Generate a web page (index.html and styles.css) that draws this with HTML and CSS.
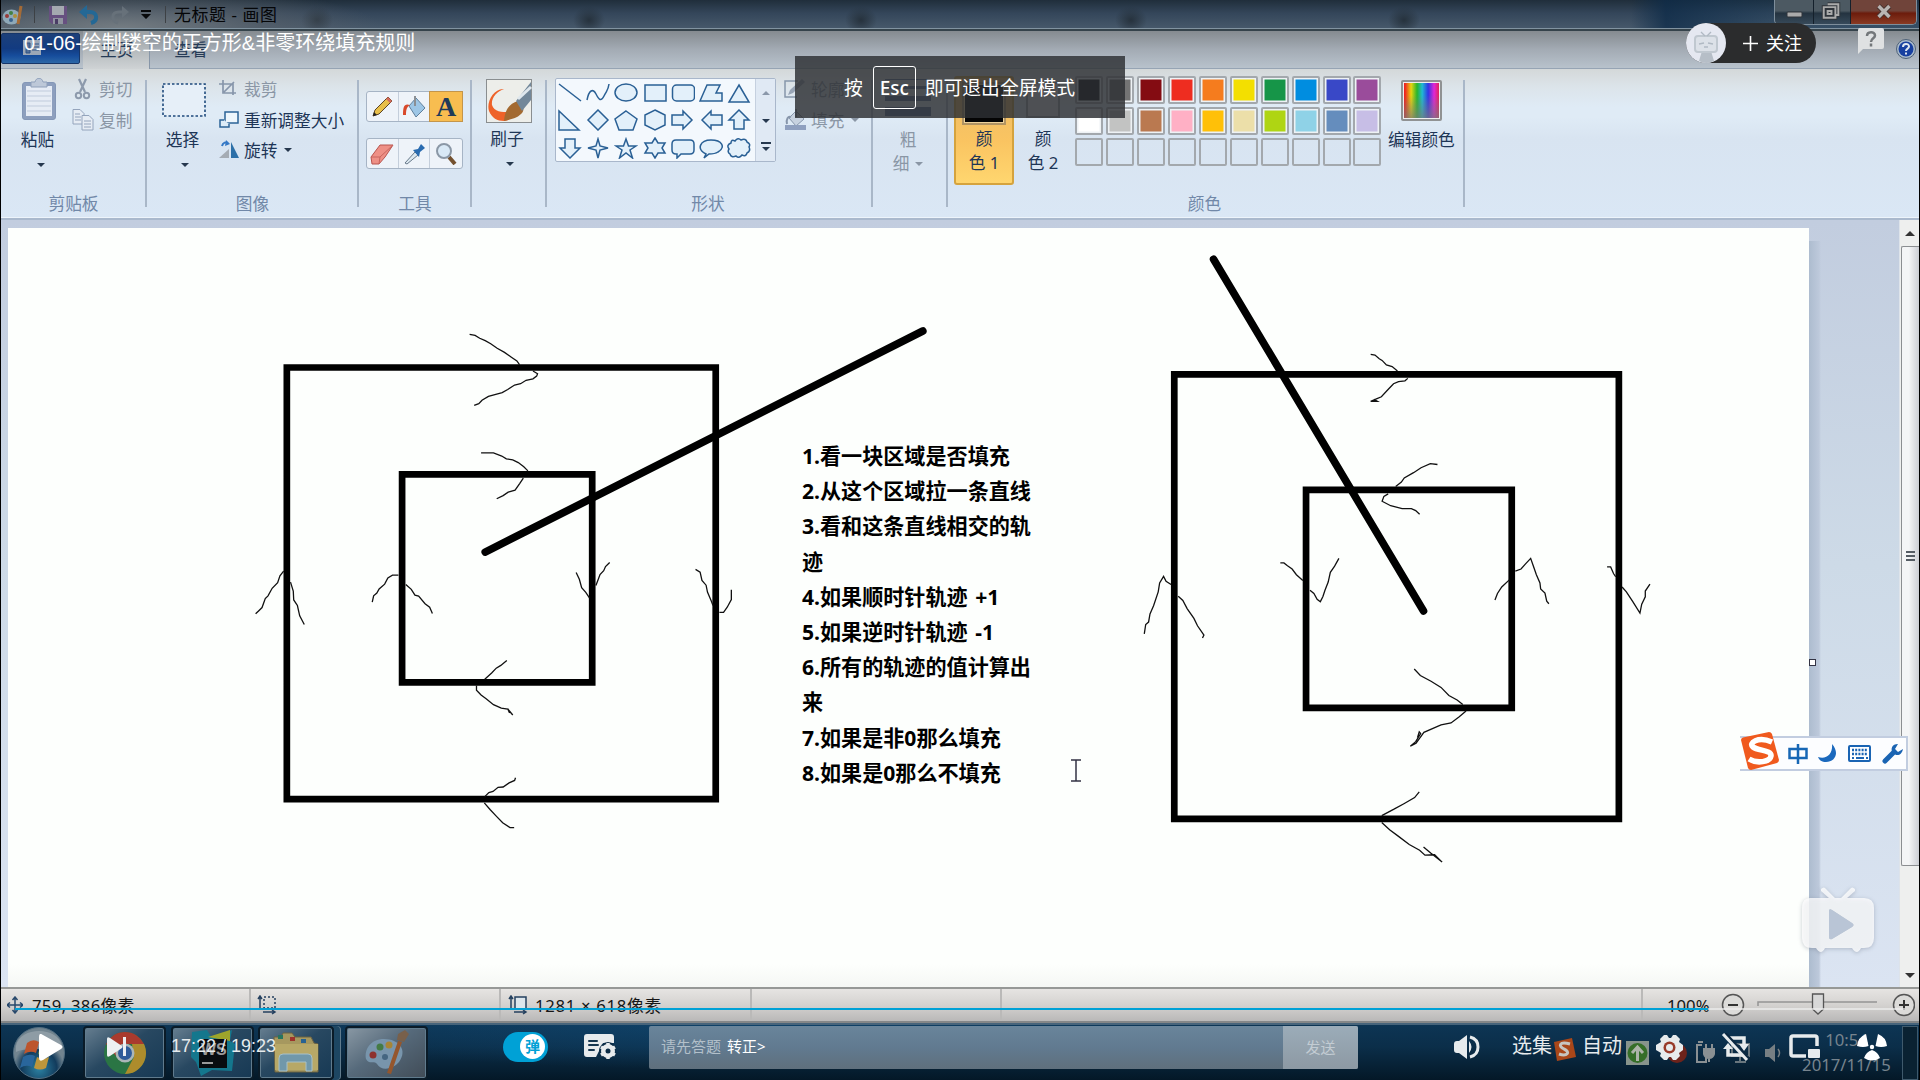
FILE: index.html
```html
<!DOCTYPE html>
<html lang="zh-CN">
<head>
<meta charset="utf-8">
<title>无标题 - 画图</title>
<link rel="stylesheet" href="styles.css">
</head>
<body>
<div class="screen">
  <header class="titlebar">
    <svg class="tb-icon" width="22" height="22" viewBox="0 0 22 22"><ellipse cx="9.500" cy="13" rx="9" ry="7.500" fill="#8fa9b8"/><circle cx="5" cy="12" r="2" fill="#973c39"/><circle cx="9" cy="9" r="2" fill="#438243"/><circle cx="13" cy="12" r="2" fill="#af913a"/><circle cx="9" cy="16" r="2" fill="#3a638d"/><path d="M19 2l-3 18" stroke="#a56b36" stroke-width="3"/></svg>
    <i class="tb-sep"></i>
    <svg class="tb-icon save" width="20" height="20" viewBox="0 0 20 20"><path d="M1 1h18v18H4l-3-3z" fill="#675080"/><path d="M4 1h12v9H4z" fill="#a5a9b0"/><path d="M5 13h10v6H5z" fill="#9194a0"/><path d="M7 14h3v5H7z" fill="#4a3c65"/></svg>
    <svg class="tb-icon" width="20" height="20" viewBox="0 0 20 20"><path d="M4 7h7c8 0 8 9 1 11" fill="none" stroke="#246895" stroke-width="4"/><path d="M0 7l8-7v14z" fill="#246895"/></svg>
    <svg class="tb-icon" width="20" height="20" viewBox="0 0 20 20"><path d="M16 7H9C1 7 1 16 8 18" fill="none" stroke="#67717a" stroke-width="3"/><path d="M19 7l-7-6v12z" fill="#67717a"/></svg>
    <svg class="tb-icon" width="10" height="10" viewBox="0 0 10 10"><path d="M0 0h10v2H0zM0 4h10L5 9z" fill="#07090b"/></svg>
    <i class="tb-sep"></i>
    <span class="tb-title">无标题 - 画图</span>
    <div class="win-buttons">
      <svg width="38" height="24" viewBox="0 0 38 24"><rect x="12" y="12" width="15" height="5" rx="1" fill="#aaa" stroke="#30353b"/></svg>
      <svg width="37" height="24" viewBox="0 0 37 24"><path d="M14 4h11v11h-3M10 7h12v11H10zM14 11h4v3h-4z" fill="none" stroke="#30353b" stroke-width="4"/><path d="M14 4h11v11h-3M10 7h12v11H10zM14 11h4v3h-4z" fill="none" stroke="#aaa" stroke-width="2"/></svg>
      <svg class="close" width="66" height="24" viewBox="0 0 66 24"><path d="M28 6l11 11M39 6L28 17" stroke="#44302c" stroke-width="5.500"/><path d="M28 6l11 11M39 6L28 17" stroke="#b9b4b2" stroke-width="3.500"/></svg>
    </div>
  </header>
  <nav class="tabs">
    <span class="tab file"><svg width="32" height="18" viewBox="0 0 32 18"><rect x="1" y="1" width="18" height="15" fill="#9ca7b6"/><path d="M4 4h4v10H4zM10 5h7M10 8h7M10 11h7" stroke="#2c5286" fill="#526f98"/><path d="M25 6h7l-3.500 4z" fill="#213b5d"/></svg></span>
    <span class="tab active">主页</span>
    <span class="tab">查看</span>
    <svg class="help" width="20" height="20" viewBox="0 0 20 20"><circle cx="10" cy="10" r="9.500" fill="#a9bacb" stroke="#4d6077"/><circle cx="10" cy="10" r="7.500" fill="#1840a0"/><path d="M7 8c0-4 6-4 6-.500 0 2.200-3 2-3 4.500M10 13.500v2" fill="none" stroke="#dfe6f0" stroke-width="2"/></svg>
  </nav>
  <section class="ribbon">
    <div class="group g-clip">
      <div class="body">
        <div class="big">
          <svg width="36" height="44" viewBox="0 0 36 44"><rect x="1.500" y="4.500" width="33" height="37" rx="2.500" fill="#8d9fbe" stroke="#8497b7"/><rect x="5" y="8" width="26" height="30" fill="#e6ecf5"/><path d="M6 13h24M6 18h24M6 23h24M6 28h24M6 33h24" stroke="#c0cbdc"/><path d="M10 9V4h4c1-5 7-5 8 0h4v5z" fill="#bdc8d8" stroke="#8fa0ba"/></svg>
          <span>粘贴</span><i class="arrow"></i>
        </div>
        <div class="rows">
          <div class="row off"><svg width="22" height="22" viewBox="0 0 22 22"><path d="M7 1l6 13M14 1L8 14" stroke="#8d9aac" stroke-width="2.200"/><circle cx="6.500" cy="17.500" r="2.700" fill="none" stroke="#8d9aac" stroke-width="2"/><circle cx="14.500" cy="17.500" r="2.700" fill="none" stroke="#8d9aac" stroke-width="2"/></svg><span>剪切</span></div>
          <div class="row off"><svg width="22" height="22" viewBox="0 0 22 22"><path d="M1 .500h7l4 4V15H1z" fill="#e6ecf4" stroke="#94a4bc"/><path d="M3 5h5M3 8h6M3 11h6" stroke="#94a4bc"/><path d="M10 6.500h7l4 4V21H10z" fill="#e6ecf4" stroke="#94a4bc"/><path d="M12 12h7M12 15h7M12 18h7" stroke="#94a4bc"/></svg><span>复制</span></div>
        </div>
      </div>
      <div class="label">剪贴板</div>
    </div>
    <div class="group g-image">
      <div class="body">
        <div class="big">
          <svg width="44" height="44" viewBox="0 0 44 44"><rect x="1" y="6" width="42" height="32" fill="#e6eff8" stroke="#1f4a7c" stroke-width="1.600" stroke-dasharray="2.500 2"/></svg>
          <span>选择</span><i class="arrow"></i>
        </div>
        <div class="rows">
          <div class="row off"><svg width="20" height="20" viewBox="0 0 20 20"><path d="M0 5h14v11M4 1v13h13M15 3L5 13M4 14" fill="none" stroke="#8796ab" stroke-width="1.700"/></svg><span>裁剪</span></div>
          <div class="row"><svg width="20" height="20" viewBox="0 0 20 20"><rect x="6" y="2" width="13" height="11" fill="#eef6fc" stroke="#2b6397" stroke-width="1.500"/><path d="M5 10H1v7h9v-3" fill="#dcecf8" stroke="#2b6397" stroke-width="1.500"/></svg><span>重新调整大小</span></div>
          <div class="row"><svg width="20" height="20" viewBox="0 0 20 20"><path d="M0 18h10V9z" fill="#a5acb4"/><path d="M12 2v16h8z" fill="#2d70a8"/><path d="M3 6c1-4 4-4 6-3" fill="none" stroke="#3377c5" stroke-width="2"/><path d="M7 0l4 4-5 2z" fill="#3377c5"/></svg><span>旋转</span><i class="arrow"></i></div>
        </div>
      </div>
      <div class="label">图像</div>
    </div>
    <div class="group g-tools">
      <div class="body">
        <div class="tool-strip">
          <span><svg width="22" height="22" viewBox="0 0 22 22"><path d="M2 20l2-6L17 1l4 4L8 18z" fill="#e8bf4a" stroke="#5c4426"/><path d="M15 3l4 4 2-2-4-4z" fill="#d46a5c"/><path d="M2 20l1-4 3 3z" fill="#222"/></svg></span>
          <span><svg width="24" height="24" viewBox="0 0 24 24"><path d="M7 11l7-8 9 10-9 9z" fill="#9dc6e6" stroke="#60809c"/><path d="M13 1v10" stroke="#8b8f94" stroke-width="2"/><path d="M1 20c0-8 1-12 7-10-3 2-4 4-4 10z" fill="#d8492b"/></svg></span>
          <span class="on">A</span>
        </div>
        <div class="tool-strip">
          <span><svg width="24" height="22" viewBox="0 0 24 22"><path d="M1 14L10 2h13l-8 12-6 7H2z" fill="#ee9086" stroke="#b8544f"/><path d="M1 14h9l-1 7M10 14L23 2" fill="none" stroke="#c8655e"/></svg></span>
          <span><svg width="22" height="22" viewBox="0 0 22 22"><path d="M2 20L12 9l3 3L4 21z" fill="#dce8f0" stroke="#68798a"/><path d="M10 7l5-1 3-5 4 4-5 4-1 5z" fill="#296bb0"/></svg></span>
          <span><svg width="22" height="22" viewBox="0 0 22 22"><path d="M14 14l6 7" stroke="#74512f" stroke-width="4"/><circle cx="9" cy="8" r="7" fill="#d9e9f6" stroke="#8b98a6" stroke-width="2"/></svg></span>
        </div>
      </div>
      <div class="label">工具</div>
    </div>
    <div class="group g-brush">
      <div class="body">
        <div class="big">
          <svg width="46" height="44" viewBox="0 0 46 44"><rect x=".5" y=".5" width="45" height="43" fill="#edeeea" stroke="#8a8e90"/><path d="M18 10C8 9 0 23 3 32c3 7 8 10 15 10 7 0 9-6 5-9-7 0-15 0-17-7-1-7 5-14 12-16z" fill="#ee6229"/><path d="M18 42c1-10 4-17 14-20 6 5 7 9 3 13-5 5-10 5-17 7z" fill="#a36a31"/><path d="M30 22L45 3v18l-9 11z" fill="#728799"/><path d="M32 20L45 8" stroke="#dfe7ed" stroke-width="3"/></svg>
          <span>刷子</span><i class="arrow"></i>
        </div>
      </div>
    </div>
    <div class="group g-shapes">
      <div class="body">
        <div class="gallery">
          <div class="shapes">
            <svg viewBox="0 0 24 22"><path d="M1 2l22 17"/></svg>
            <svg viewBox="0 0 24 22"><path class="line" d="M1 18C3 8 7 6 10 12s5 8 8 2 4-5 5-12"/></svg>
            <svg viewBox="0 0 24 22"><ellipse cx="12" cy="10.500" rx="11" ry="8.500"/></svg>
            <svg viewBox="0 0 24 22"><rect x="2" y="3" width="21" height="16"/></svg>
            <svg viewBox="0 0 24 22"><rect x="1.500" y="3" width="22" height="16" rx="4"/></svg>
            <svg viewBox="0 0 24 22"><path d="M8 3h13l-4 8h6v8H1z"/></svg>
            <svg viewBox="0 0 24 22"><path d="M12 3l10 17H2z"/></svg>
            <svg viewBox="0 0 24 22"><path d="M1 2v19h20z"/></svg>
            <svg viewBox="0 0 24 22"><path d="M12 1l10 10-10 10L2 11z"/></svg>
            <svg viewBox="0 0 24 22"><path d="M12 2l11 8-4 11H5L1 10z"/></svg>
            <svg viewBox="0 0 24 22"><path d="M12 1l10 5v10l-10 5-10-5V6z"/></svg>
            <svg viewBox="0 0 24 22"><path d="M1 6h11V2l9 9-9 9v-4H1z"/></svg>
            <svg viewBox="0 0 24 22"><path d="M23 6H12V2l-9 9 9 9v-4h11z"/></svg>
            <svg viewBox="0 0 24 22"><path d="M12 1l10 10h-5v9H7v-9H2z"/></svg>
            <svg viewBox="0 0 24 22"><path d="M12 21L2 11h5V2h10v9h5z"/></svg>
            <svg viewBox="0 0 24 22"><path d="M12 2l2 7 8 2-8 2-2 8-2-8-8-2 8-2z"/></svg>
            <svg viewBox="0 0 24 22"><path d="M12 2l2.500 7H22l-6 4 2.500 8L12 16l-6.500 5L8 13 2 9h7.500z"/></svg>
            <svg viewBox="0 0 24 22"><path d="M12 1l3 5h7l-3 5 3 5h-7l-3 5-3-5H2l3-5-3-5h7z"/></svg>
            <svg viewBox="0 0 24 22"><path d="M5 3h14q4 0 4 4v6q0 4-4 4h-9l-4 4v-4H5q-4 0-4-4V7q0-4 4-4z"/></svg>
            <svg viewBox="0 0 24 22"><path d="M7 17C-3 12 1 3 12 3s15 7 7 12c-3 2-6 2-9 2l-5 4z"/></svg>
            <svg viewBox="0 0 24 22"><path d="M4 6q0-4 4-2 3-4 6-1 5-2 6 2 4 2 2 5 2 4-2 6-1 4-5 2-3 4-6 1-5 2-6-2-3-2-1-5-3-4 2-6z"/></svg>
          </div>
          <div class="gallery-scroll"><i class="up"></i><i class="arrow"></i><i class="arrow more"></i></div>
        </div>
        <div class="rows">
          <div class="row off"><svg width="22" height="22" viewBox="0 0 22 22"><path d="M14 3H1v16h12" fill="none" stroke="#8796ab" stroke-width="1.500"/><path d="M4 17l2-5L18 1l3 3L9 15z" fill="#98a5b6"/></svg><span>轮廓</span><i class="arrow"></i></div>
          <div class="row off"><svg width="22" height="22" viewBox="0 0 22 22"><path d="M5 9l7-7 8 8-8 7z" fill="#c7d2e0" stroke="#8796ab"/><path d="M1 16h21v5H1z" fill="#8fa0bf"/><path d="M12 0v8M3 15c-1-5 1-8 4-7" fill="none" stroke="#8796ab" stroke-width="2"/></svg><span>填充</span><i class="arrow"></i></div>
        </div>
      </div>
      <div class="label">形状</div>
    </div>
    <div class="group g-size">
      <div class="body">
        <div class="big off"><svg width="46" height="40" viewBox="0 0 46 40"><path d="M0 1h46v1H0zM0 8h46v3H0zM0 18h46v5H0zM0 29h46v9H0z" fill="#59709c"/></svg><span class="two">粗<br>细<i class="arrow"></i></span></div>
      </div>
    </div>
    <div class="group g-colors">
      <div class="body">
        <div class="color-pick sel"><i class="well black"></i><span>颜<br>色 1</span></div>
        <div class="color-pick"><i class="well"></i><span>颜<br>色 2</span></div>
        <div class="palette">
          <i class="c1"></i><i class="c2"></i><i class="c3"></i><i class="c4"></i><i class="c5"></i><i class="c6"></i><i class="c7"></i><i class="c8"></i><i class="c9"></i><i class="c10"></i>
          <i class="d1"></i><i class="d2"></i><i class="d3"></i><i class="d4"></i><i class="d5"></i><i class="d6"></i><i class="d7"></i><i class="d8"></i><i class="d9"></i><i class="d10"></i>
          <i></i><i></i><i></i><i></i><i></i><i></i><i></i><i></i><i></i><i></i>
        </div>
        <div class="edit"><i class="rainbow"></i><span>编辑颜色</span></div>
      </div>
      <div class="label">颜色</div>
    </div>
  </section>

  <main class="workspace">
    <div class="canvas">
      <svg class="drawing" width="1801" height="759" viewBox="8 228 1801 759">
        <g transform="translate(240 310) scale(.4592 .3444)">
          <g class="thick"><path d="M102 167H1036V1420H102zM353 477H767V1081H353z"/><path class="ray" d="M534 703L1487 61"/></g>
          <g class="thin">
            <path d="M500 71l12 3 10 8 12 7 12 9 14 13 16 12 15 14 12 11 6 11M638 177l10 8-2 7-8 8-15 4-12 10-13 4-15 13-12 9-14 5-16 6-14 11-7 10-10 5"/>
            <path d="M525 415h27l18 9 10 8 14 3 12 8 12 12 9 12M617 488l-8 16-10 19-15 6-11 10-14 9"/>
            <path d="M95 758l-8 14-5 20-12 16-9 22-6 8-7 26-7 9-7 9M110 790l6 26 1 26 8 16 5 30 10 25"/>
            <path d="M345 770h-13l-10 8-7 18-12 14-5 12-7 8-3 18M361 797l12 14 8 17 8 3 14 22 10 10 6 18"/>
            <path d="M732 762l7 20 5 24 9 14 8 16M775 800l4-14 5-18 8-11 4-12 9-12"/>
            <path d="M992 753l10 8 4 24 9 14 3 20 9 28 3 11M1044 878h9l8-15 9-22V812"/>
            <path d="M581 1018l-13 14-10 8-10 14-15 18M515 1090v14l10 14 11 11 16 17 17 10 14 3 11 17-11-18 4 12"/>
            <path d="M600 1358l-2 8-12 7-13 12-11 1-11 12-9 3-9 12M532 1431l13 20 12 17 15 21 16 14h9"/>
          </g>
        </g>
        <g transform="translate(1120 240) scale(.3571 .4082)">
          <g class="thick"><path d="M152 329H1397V1418H152zM521 612H1097V1146H521z"/><path class="ray" d="M262 47L850 909"/></g>
          <g class="thin">
            <path d="M702 280l12 2 12 9 8 4 12 11 16 4 15 11M806 339l-8 6-18 2-14 5-14 13-20 19-14 5-16 6h19l-10-5"/>
            <path d="M889 550l-20-2-26 10-21 12-26 13-8 10-16 11M751 622l-12 6-5 12 24 11 32 7h26l12 5 11 9"/>
            <path d="M143 844l-14-8-7-12-11 16-4 22-13 34-10 20-4 20-8 6-4 23M163 873l13 10 12 20 19 24 10 18 18 23-4 7"/>
            <path d="M449 791h10l10 7 13 8 12 14 18 14M532 858l11 8 9 14 9 6 7-12 6-16 9-20 6-24 12-15 12-19"/>
            <path d="M1050 882l7-16 12-16 22-18M1107 811l16-5 12-12 15-14 8 20 8 20 10 20 2 15 12 10 5 20 6 6"/>
            <path d="M1364 801h10l8 16 6 8M1406 850l12 12 18 24 20 28 5-22 10-18v-14l13-17"/>
            <path d="M824 1051l17 16 30 14 28 15 22 20 23 11 16 11M969 1154l-19 14-23 15-28 5-48 18-22 27-16 7 15-11 14-20-4-4-5 14"/>
            <path d="M838 1352l-13 14-30 15-29 14-33 15M733 1427l22 18 25 16 30 20 29 14 15 12 27-1 21 18-32-22-20-15"/>
          </g>
        </g>
        <path class="caret" d="M1071 760h10M1071 781h10M1076 760v21"/>
      </svg>
      <div class="note">
        <p>1.看一块区域是否填充</p><p>2.从这个区域拉一条直线</p><p>3.看和这条直线相交的轨迹</p><p>4.如果顺时针轨迹<i></i> +1</p><p>5.如果逆时针轨迹<i></i> -1</p><p>6.所有的轨迹的值计算出来</p><p>7.如果是非0那么填充</p><p>8.如果是0那么不填充</p>
      </div>
    </div>
    <div class="gutter"><i class="handle"></i></div>
    <div class="scrollbar"><i class="up"></i><div class="thumb"><i></i><i></i><i></i></div><i class="arrow"></i></div>
  </main>

  <footer class="status">
    <span><svg width="16" height="18" viewBox="0 0 16 18"><path d="M8 1v16M0 9h16M5.500 4L8 1l2.500 3M5.500 14L8 17l2.500-3M3 6.500L0 9l3 2.500M13 6.500L16 9l-3 2.500" fill="none" stroke="#29496c" stroke-width="1.500"/></svg><b class="pos">759, 386像素</b></span>
    <span><svg width="20" height="20" viewBox="0 0 20 20"><path d="M3 13V2M1 4l2-3 2 3M6 17h11M15 15l3 2-3 2" fill="none" stroke="#24405f" stroke-width="1.500"/><rect x="7" y="2" width="11" height="11" fill="none" stroke="#24405f" stroke-width="1.500" stroke-dasharray="2 2"/></svg></span>
    <span><svg width="20" height="20" viewBox="0 0 20 20"><path d="M3 13V2M1 4l2-3 2 3M6 17h11M15 15l3 2-3 2" fill="none" stroke="#24405f" stroke-width="1.500"/><rect x="7" y="2" width="11" height="12" fill="#dde6ec" stroke="#24405f" stroke-width="1.500"/></svg><b class="dim">1281 × 618像素</b></span>
    <span></span><span></span>
    <span class="zoom"><b>100%</b><svg width="194" height="26" viewBox="0 0 194 26"><g fill="#dcdbd9" stroke="#555" stroke-width="1.500"><circle cx="12" cy="13" r="10.500"/><circle cx="183" cy="13" r="10.500"/></g><path d="M7 13h10M178 13h10M183 8v10" stroke="#333" stroke-width="2"/><path d="M37 14v-4h119" fill="none" stroke="#949494" stroke-width="1.500"/><path d="M91.500 2h11v15l-5.500 5-5.500-5z" fill="#d8d8d8" stroke="#555" stroke-width="1.300"/></svg></span>
  </footer>

  <div class="taskbar">
    <svg width="54" height="54" viewBox="0 0 54 54"><defs><radialGradient id="orb" cy=".8"><stop stop-color="#2c83a4"/><stop offset=".7" stop-color="#123b5c"/><stop offset="1" stop-color="#72848f"/></radialGradient></defs><circle cx="27" cy="27" r="25.500" fill="url(#orb)" stroke="#536f82"/><path d="M4 20C8 0 46 0 50 20 40 26 16 20 4 26z" fill="#a5b1b8" opacity=".55"/><path d="M15 17q6-5 12-1l-3 11q-6-3-12 1z" fill="#bd552d"/><path d="M29 17q6 3 12 0l-3 11q-6 3-12 0z" fill="#62863a"/><path d="M11 31q6-4 12-1l-3 11q-6-3-12 1z" fill="#29669c"/><path d="M25 31q6 3 12 0l-3 11q-6 3-12 0z" fill="#bd963b"/></svg>
    <div class="task"><svg width="44" height="44" viewBox="0 0 44 44"><circle cx="22" cy="22" r="21" fill="#2a7544"/><path d="M3 13A21 21 0 0 1 41 13H22L13 25z" fill="#a93a2e"/><path d="M41 13A21 21 0 0 1 22 43l9-17-2-13z" fill="#ad8c2c"/><circle cx="22" cy="22" r="9.500" fill="#abb6b8"/><circle cx="22" cy="22" r="7" fill="#2f5c9a"/></svg></div>
    <div class="task"><svg width="50" height="46" viewBox="0 0 50 46"><path d="M4 2l15-2 5 8 20-8-2 11 5 3-3 27-20-1-11 6-5-14-5-5z" fill="#14778d"/><path d="M20 7L42 0v11z" fill="#9da52b"/><path d="M11 9h28v29H11z" fill="#080c10"/><path d="M14 32h11v2H14z" fill="#999"/><text x="13" y="25" class="ws">WS</text></svg></div>
    <div class="task explorer"><svg width="46" height="42" viewBox="0 0 46 42"><path d="M1 5h7l2-4h9l3 4h16l3 6 4 1v28H2z" fill="#a6985f" stroke="#6b6243"/><path d="M5 3h5v4H5z" fill="#27755e"/><path d="M17 5h5v4h-5z" fill="#9e332b"/><path d="M28 7h5v4h-5z" fill="#286292"/><path d="M2 12h43v26H2z" fill="#b7a867"/><path d="M6 39V26q0-4 4-4h25q4 0 4 4v13h-6v-9H14v9z" fill="#7198aa" stroke="#a6c0c9"/></svg></div>
    <div class="task paint"><svg width="46" height="46" viewBox="0 0 46 46"><path d="M20 9C7 9 0 19 2 29c3 6 8 1 11 5 4 7 15 6 22-2C44 20 35 9 20 9z" fill="#7895ac"/><circle cx="9" cy="25" r="3.500" fill="#8e312f"/><circle cx="16" cy="17" r="3.500" fill="#437b45"/><circle cx="25" cy="15" r="3.500" fill="#a78535"/><circle cx="21" cy="27" r="3" fill="#456681"/><path d="M23 43L34 11l4 1-11 32z" fill="#94562d"/><path d="M33 10l1-6 7-4 4 4-5 8z" fill="#78604b"/></svg></div>
    <svg class="sogou" width="23" height="25" viewBox="0 0 23 25"><path d="M1 5L19 1l4 19-19 4z" fill="#a94719"/><path d="M17 7C6 4 5 9 11 12c7 3 3 8-5 5" fill="none" stroke="#c7c5bf" stroke-width="3"/></svg>
    <svg width="23" height="24" viewBox="0 0 23 24"><path d="M0 0h23v24H0z" fill="#88948c"/><circle cx="11.500" cy="12" r="10" fill="#356e28"/><path d="M11.500 20V7M6 12l5.500-6 5.500 6" fill="none" stroke="#adb4a9" stroke-width="3"/></svg>
    <svg width="20" height="26" viewBox="0 0 20 26"><circle cx="9" cy="13" r="10" fill="#6d231b"/></svg>
    <svg width="22" height="24" viewBox="0 0 22 24"><path d="M8 4H3v17h9v-5M4 1h5" fill="none" stroke="#8a9093" stroke-width="2"/><path d="M10 8h10v5q-1 4-5 4t-5-4zM12 3v5M18 3v5M15 17v4" fill="#8a9093" stroke="#8a9093" stroke-width="2"/></svg>
    <svg width="24" height="24" viewBox="0 0 24 24"><path d="M3 3h17v12H3zM11 15v5M6 21h11" fill="none" stroke="#69767e" stroke-width="2"/></svg>
    <svg width="20" height="20" viewBox="0 0 20 20"><path d="M1 6h4l6-5v18l-6-5H1z" fill="#777f83"/><path d="M14 6q3 4 0 8" fill="none" stroke="#777f83" stroke-width="1.500"/></svg>
    <div class="clock"><span>10:54</span><span>2017/11/15</span></div>
    <i class="peek"></i>
  </div>

  <div class="video-title">01-06-绘制镂空的正方形&amp;非零环绕填充规则</div>
  <div class="toast"><span>按</span><kbd>Esc</kbd><span>即可退出全屏模式</span></div>
  <div class="follow">
    <svg width="40" height="40" viewBox="0 0 40 40"><circle cx="20" cy="20" r="20" fill="#e5e8f1"/><path d="M16 28h9l3 10q-8 4-15 0z" fill="#b6bec7"/><rect x="9" y="13" width="22" height="16" rx="3" fill="#dce1e8" stroke="#c0c8d0" stroke-width="2"/><path d="M15 9l4 4M25 9l-4 4M13 21l5-1M27 21l-5-1M18 24h4" fill="none" stroke="#b0b9c3" stroke-width="1.300"/></svg>
    <svg width="15" height="15" viewBox="0 0 15 15"><path d="M7.500 0v15M0 7.500h15" stroke="#fff" stroke-width="1.600"/></svg>
    <span>关注</span>
  </div>
  <svg class="feedback" width="27" height="26" viewBox="0 0 27 26"><path d="M2 0h22q2 0 2 2v17q0 2-2 2H5l-5 5V2q0-2 2-2z" fill="#dfe1e2"/><path d="M9 8c0-5 8-5 8-.500 0 3-4 2.500-4 6.500M13 15.500v3" fill="none" stroke="#73777a" stroke-width="2.500"/></svg>

  <div class="ime">
    <svg width="41" height="40" viewBox="0 0 41 40"><path d="M1 8q0-2 2-2.500L29 0q2 0 3 2l7 26q0 2-2 3L11 38q-2 0-3-2z" fill="#f05a1e"/><path d="M32 10C18 4 8 11 13 15s19 3 18 9-14 8-22 3" fill="none" stroke="#fff" stroke-width="5.500"/></svg>
    <svg width="20" height="22" viewBox="0 0 20 22"><path d="M1.500 6h17v9h-17zM10 1v20" fill="none" stroke="#1767b5" stroke-width="2.500"/></svg>
    <svg width="20" height="20" viewBox="0 0 20 20"><path d="M14 0c8 9 3 18-6 18-4 0-7-2-8-5 9 3 15-4 14-13z" fill="#1b69bd"/></svg>
    <svg width="24" height="18" viewBox="0 0 24 18"><rect x="1" y="1" width="21" height="15" rx="1" fill="#fff" stroke="#1a64b3" stroke-width="2"/><path d="M4 5h15M4 9h15" stroke="#1a64b3" stroke-width="2.500" stroke-dasharray="2 1.200"/><path d="M4 13h2M8 13h8M18 13h2" stroke="#1a64b3" stroke-width="2"/></svg>
    <svg width="21" height="20" viewBox="0 0 21 20"><path d="M3 17L12 8" stroke="#1a64b3" stroke-width="5" stroke-linecap="round"/><path d="M16 0c-6 0-8 5-5 9 4 4 9 2 10-4l-5 3-3-3z" fill="#1a64b3"/></svg>
  </div>
  <svg class="watermark" width="76" height="68" viewBox="0 0 76 68"><g fill="#fff" opacity=".78"><path d="M10 12h54q10 0 10 10v30q0 10-10 10H12Q2 62 2 52V22q0-10 8-10zm19 13v26q0 3 3 2l20-12q3-2 0-4L32 24q-3-2-3 1z" fill-rule="evenodd"/><path d="M21 3q3-3 5 0l9 9H29l-8-7zM55 3q-3-3-5 0l-9 9h6l8-7zM16 62h9q-4 8-9 0M52 62h9q-4 8-9 0"/></g><path d="M29 25v26q0 3 3 2l20-12q3-2 0-4L32 24q-3-2-3 1z" fill="#bcc9da" opacity=".75"/></svg>

  <div class="progress"><i></i></div>
  <div class="controls">
    <svg width="24" height="27" viewBox="0 0 24 27"><path d="M0 3q0-5 4-2l18 10q3 2 0 4L4 26q-4 2-4-2z" fill="#fff"/></svg>
    <svg width="20" height="20" viewBox="0 0 20 20"><path d="M0 2q0-3 3-1l12 8q1 1 0 2L3 19q-3 2-3-1zM16 0h3v19h-3z" fill="#edf0f2"/></svg>
    <span class="time">17:22 / 19:23</span>
    <span class="toggle"><b>弹</b></span>
    <svg width="32" height="26" viewBox="0 0 32 26"><path d="M3 0h24q3 0 3 3v6H19l-7 14H3q-3 0-3-3V3q0-3 3-3z" fill="#e7ebed"/><path d="M5 7h8M5 11h9M5 16h5" stroke="#15364f" stroke-width="2" stroke-linecap="round"/><circle cx="24" cy="17" r="9" fill="#0a2b45"/><circle cx="24" cy="17" r="5" fill="none" stroke="#e7ebed" stroke-width="4"/><path d="M24 9v16M17 13l14 8M17 21l14-8" stroke="#e7ebed" stroke-width="3.500"/><circle cx="24" cy="17" r="2.500" fill="#0a2b45"/></svg>
    <div class="danmaku"><span>请先答题</span><a>转正&gt;</a><button>发送</button></div>
    <svg width="27" height="24" viewBox="0 0 27 24"><path d="M0 9q0-3 3-3h2l8-6v24l-8-6H3q-3 0-3-3zM15 6q5 6 0 12z" fill="#e7ebed"/><path d="M16 2q8 2 8 10t-8 10" fill="none" stroke="#e7ebed" stroke-width="3"/></svg>
    <span class="ctl">选集</span>
    <span class="ctl">自动</span>
    <svg width="29" height="27" viewBox="0 0 29 27"><path d="M9 1h3l2 3h2l2-3h3l4 4-1 3 4 3v5l-4 3 1 3-4 4h-3l-2-3h-2l-2 3H9l-4-4 1-3-5-3v-5l5-3-1-3z" fill="#e7ebed"/><circle cx="14.500" cy="13.500" r="6" fill="#983a2a"/><circle cx="14.500" cy="13.500" r="3.500" fill="#e7ebed"/></svg>
    <svg width="30" height="28" viewBox="0 0 30 28"><path d="M9 5h14v8M7 14v8h15" fill="none" stroke="#e7ebed" stroke-width="3.500"/><path d="M18 11h10l-5 7zM2 16h10L7 10z" fill="#e7ebed"/><path d="M4 0l24 26" stroke="#0a2740" stroke-width="3"/><path d="M2 1l24 26" stroke="#e7ebed" stroke-width="3"/></svg>
    <svg width="32" height="26" viewBox="0 0 32 26"><path d="M28 12V4q0-2-2-2H4Q2 2 2 4v16q0 2 2 2h13" fill="none" stroke="#e7ebed" stroke-width="3.500"/><rect x="19" y="15" width="12" height="9" rx="1" fill="#e7ebed"/></svg>
    <svg width="30" height="28" viewBox="0 0 30 28"><g fill="#fff"><circle cx="15" cy="14" r="2.200"/><path d="M11.500 13L9 1Q1 4 0 13q6 2 11.500 0zM18.500 13L21 1q8 3 9 12-6 2-11.500 0zM15 17q-6 2-8 8 8 5 16 0-2-6-8-8z"/></g></svg>
  </div>
</div>
</body>
</html>
```
FILE: styles.css
```css
* { box-sizing: border-box; }
body { margin: 0; background: #000; font-family: "Noto Sans", "Noto Sans CJK SC", sans-serif; }
i { font-style: normal; }
svg { display: block; flex: none; }
.screen { position: relative; width: 1920px; height: 1080px; overflow: hidden; padding: 0 1px; display: flex; flex-direction: column; font-size: 16.7px; color: #1d3556; background: #000; }

.titlebar { height: 31px; flex: none; display: flex; align-items: center; position: relative; border-bottom: 2px solid #35434b; box-shadow: inset 0 -1px #8193a0;
  background: radial-gradient(ellipse 260px 44px at 120px 28px, #747c82, rgba(90,98,106,.6) 55%, transparent), radial-gradient(ellipse 16px 14px at 316px 20px, #26323d, transparent), radial-gradient(ellipse 16px 14px at 588px 20px, #26323d, transparent), radial-gradient(ellipse 16px 14px at 860px 20px, #26323d, transparent), radial-gradient(ellipse 16px 14px at 1130px 20px, #26323d, transparent), radial-gradient(ellipse 16px 14px at 1403px 20px, #26323d, transparent), linear-gradient(90deg, transparent 1630px, rgba(12,42,72,.75) 1665px, rgba(20,58,90,.3) 1770px), linear-gradient(#202e3b, #34465a 45%, #47596b); }
.tb-icon:nth-of-type(1) { margin-left: 1px; }
.tb-sep { width: 1px; height: 17px; margin: 0 14px 0 10px; background: #3d4145; }
.tb-icon + .tb-icon { margin-left: 11px; }
.tb-icon + .tb-sep { margin: 0 8px 0 14px; }
.tb-icon + .tb-sep:nth-child(2) { margin: 0 13px 0 10px; }
.tb-title { font-size: 16.9px; letter-spacing: .6px; color: #050608; white-space: nowrap; line-height: 28px; }
.win-buttons { margin-left: auto; margin-right: 2px; align-self: flex-start; display: flex; border: 1px solid #7e8e9b; border-top: 0; border-radius: 0 0 5px 5px; overflow: hidden; background: linear-gradient(#4c5962 45%, #243340 55%, #374a5a); height: 25px; }
.win-buttons svg + svg { border-left: 1px solid #14202b; }
.win-buttons .close { background: linear-gradient(#70443a 45%, #6c1c0c 55%, #893a23); }

.tabs { height: 38px; flex: none; display: flex; align-items: flex-start; background: linear-gradient(#858b90, #a3abb4 50%, #b8c2cc); border-bottom: 1px solid #96a4b4; }
.tab { height: 37px; line-height: 38px; padding: 0 17px 0 24px; color: #263b56; }
.tab.active { height: 38px; width: 67px; padding: 0 0 0 17px; background: linear-gradient(#999fa3, #cfd3d5); border-right: 1px solid #8796a8; }
.tab.file { width: 79px; height: 31px; margin: 2px 3px 0 0; padding: 5px 0 0 20px; border-radius: 2px; background: linear-gradient(#1c407a, #123b81 50%, #164d9c 75%, #2c67a7); border: 1px solid #173669; }
.help { margin: 8px 3px 0 auto; }

.ribbon { height: 151px; flex: none; display: flex; background: linear-gradient(#d4d8d9, #dce4ea 18px, #dfebf6 38px, #dfebf6 48px, #d8e4f1 70px, #dae7f5); border-bottom: 2px solid #aab9cd; box-shadow: inset 0 -1px #edf4fb; }
.group { flex: none; display: flex; flex-direction: column; background: linear-gradient(#a9b7c8, #a9b7c8) right 11px / 2px 127px no-repeat; }
.g-clip { width: 146px; } .g-image { width: 212px; } .g-tools { width: 113px; } .g-brush { width: 75px; } .g-shapes { width: 326px; } .g-size { width: 75px; } .g-colors { width: 517px; }
.body { height: 121px; display: flex; align-items: flex-start; }
.label { line-height: 27px; text-align: center; color: #7188a8; padding-right: 1px; }
.g-shapes .label { padding-right: 4px; }
.g-colors .label { padding-right: 4px; }
.big { display: flex; flex-direction: column; align-items: center; padding-top: 9px; }
.big span { line-height: 24px; margin-top: 6px; }
.big .arrow { margin-top: 11px; }
.arrow { width: 0; height: 0; border: 4px solid transparent; border-top: 4.500px solid #26384e; border-bottom: 0; }
.up { width: 0; height: 0; border: 4px solid transparent; border-bottom: 4.500px solid #8b98aa; border-top: 0; }
.off { color: #8a96a5; }
.off .arrow { border-top-color: #8a96a5; }
.rows { padding-top: 4.500px; }
.row { height: 30.800px; display: flex; align-items: center; gap: 5px; white-space: nowrap; }
.row .arrow { margin-left: 2px; }
.g-clip .big { width: 76px; margin-right: -5px; }
.g-clip .big span { margin-left: -3px; }
.g-clip .big .arrow { margin-left: 3px; }
.g-clip .row { gap: 5px; }
.g-image .big { width: 73px; margin-right: -1px; }
.g-image .big span { margin-left: -2px; }
.g-image .big .arrow { margin-left: 3px; }
.g-tools .body { flex-direction: column; padding: 22px 0 0 7px; gap: 16px; }
.tool-strip { display: flex; width: 97px; height: 31px; border: 1px solid #a6b4c5; border-radius: 3px; background: #eef3f9; }
.tool-strip span { width: 32px; display: grid; place-items: center; border-right: 1px solid #c4cedb; }
.tool-strip span:last-child { border-right: 0; }
.tool-strip .on { background: #f8bd50; outline: 1px solid #c4954a; font: bold 28px/29px "Liberation Serif", serif; color: #203a58; }
.g-brush .big { width: 73px; padding-top: 10px; }
.g-brush .big span { margin: 4px 0 0 -3px; }
.g-brush .big .arrow { margin-left: 3px; }
.gallery { margin: 9px 9px 0 8px; width: 221px; height: 84px; border: 1px solid #a9b7cb; border-radius: 2px; background: #f3f8fd; display: flex; }
.shapes { width: 199px; display: grid; grid-template-columns: repeat(7, 28.200px); grid-template-rows: repeat(3, 27.500px); place-items: center; }
.shapes svg { width: 24px; height: 22px; fill: #e3f0fa; stroke: #2a6095; stroke-width: 1.500; }
.shapes .line { fill: none; }
.gallery-scroll { flex: 1; border-left: 1px solid #c5d0df; background: #e0e9f4; display: flex; flex-direction: column; align-items: center; justify-content: space-between; padding: 12px 0 10px; }
.more { position: relative; }
.more::before { content: ""; position: absolute; left: -5px; top: -9px; width: 10px; height: 1.500px; background: #26384e; }
.g-shapes .rows { margin-left: -1px; }
.g-size .big { width: 70px; }
.two { text-align: center; white-space: nowrap; }
.big .two { margin-top: 10px; }
.two .arrow { display: inline-block; margin: 0 0 4px 6px; }
.color-pick { margin: 7px 0 0 6px; width: 60px; height: 109px; display: flex; flex-direction: column; align-items: center; text-align: center; line-height: 24px; padding-top: 5px; border: 1px solid transparent; }
.color-pick.sel { border: 2px solid #d5a33e; border-radius: 3px; background: linear-gradient(#e9ba68, #fac461 60%, #ffd66f); padding-top: 4px; }
.color-pick + .color-pick { margin: 7px 0 0 -1px; }
.well { width: 34px; height: 36px; border: 2px solid #a1a6ac; background: #e9eef3; margin-bottom: 9px; }
.well.black { width: 44px; height: 43px; margin-bottom: 2px; border: 2px solid #b09362; background: #050505; box-shadow: inset 0 0 0 1px #eed29b; }
.palette { margin: 7px 0 0 2px; display: grid; grid-template-columns: repeat(10, 28px); grid-auto-rows: 28px; gap: 3px 2.940px; }
.palette i { border: 2px solid #a3a8ad; box-shadow: inset 0 0 0 1.500px #eef2f5; border-radius: 2px; }
.palette i:nth-child(n+21) { box-shadow: none; }
.c1 { background: #040506; } .c2 { background: #747474; } .c3 { background: #840c12; } .c4 { background: #ee2d20; } .c5 { background: #f57c1e; } .c6 { background: #f3df00; } .c7 { background: #169548; } .c8 { background: #008de0; } .c9 { background: #3948c7; } .c10 { background: #9a4c9b; }
.d1 { background: #fff; } .d2 { background: #c2c3c2; } .d3 { background: #ba7950; } .d4 { background: #ffb0c5; } .d5 { background: #ffc008; } .d6 { background: #ecdfa9; } .d7 { background: #afd513; } .d8 { background: #8fd2e7; } .d9 { background: #658dbd; } .d10 { background: #c7bee6; }
.edit { width: 80px; margin-top: 11px; display: flex; flex-direction: column; align-items: center; white-space: nowrap; line-height: 24px; }
.rainbow { width: 41px; height: 41px; margin-bottom: 7px; border: 2px solid #909293; box-shadow: inset 0 0 0 1px #eee; border-radius: 2px; background: linear-gradient(transparent 35%, rgba(120,120,120,.75)), linear-gradient(90deg, #e22 5%, #e8d510 22%, #28b62d 38%, #20b9d3 52%, #3036e5 68%, #e027d5 84%, #e02540); }

.workspace { height: 767px; flex: none; display: flex; background: linear-gradient(#c2cddf, #cddae7 45%, #dbe4f2); }
.canvas { position: relative; width: 1801px; height: 759px; margin: 8px 0 0 7px; background: linear-gradient(#fdfffd 97%, #f5f7f4); flex: none; }
.thick { fill: none; stroke: #000; stroke-width: 6.700; }
.thick path, .thin path { vector-effect: non-scaling-stroke; }
.ray { stroke-width: 7.600; stroke-linecap: round; }
.thin { fill: none; stroke: #111; stroke-width: 1.300; }
.caret { fill: none; stroke: #334; stroke-width: 1.500; }
.note { position: absolute; left: 794px; top: 210px; width: 240px; font-size: 21.100px; font-weight: 700; line-height: 35.200px; color: #000; }
.note p { margin: 0; white-space: normal; }
.note i { margin-right: 2px; }
.gutter { width: 90px; margin-top: 21px; background: linear-gradient(90deg, #adbccf, #bdc9db 10px, transparent 12px); }
.handle { display: block; width: 7px; height: 7px; margin-top: 418px; border: 1px solid #334; background: #fff; }
.scrollbar { flex: 1; background: #eeefee; border-left: 1px solid #dde3ea; display: flex; flex-direction: column; align-items: center; padding-top: 11px; }
.scrollbar .up { border-width: 0 5px 5px; border-bottom-color: #333; }
.scrollbar .thumb { align-self: stretch; margin: 10px 0 0 1px; height: 620px; border: 1px solid #8b8e91; border-right: 0; border-radius: 2px 0 0 2px; background: linear-gradient(90deg, #f4f5f6 40%, #ccced4); display: flex; flex-direction: column; align-items: center; justify-content: center; gap: 2px; }
.thumb i { width: 9px; height: 2px; background: #555c64; }
.scrollbar .arrow { margin-top: 107px; border-width: 5px 5px 0; border-top-color: #333; }

.status { height: 36px; flex: none; display: grid; grid-template-columns: 250px 250px 251px 250px 641px 276px; background: linear-gradient(#e6e4e2, #d4d2d0 50%, #b9b8b8); border-top: 2px solid #969896; border-bottom: 2px solid #858788; }
.status span { display: flex; align-items: center; padding-left: 6px; border-right: 2px solid #bab9b8; white-space: nowrap; }
.status span:nth-child(3) { padding-left: 7px; }
.status span:last-child { border: 0; }
.status b { font-weight: 400; color: #161616; font-size: 16.700px; }
.pos { margin-left: 9px; letter-spacing: .3px; } .dim { margin-left: 7px; letter-spacing: .7px; }
.status .zoom { padding-left: 24px; gap: 8px; }
.zoom b { width: 46px; }

.taskbar { height: 57px; flex: none; display: grid; align-items: center; padding: 0 0 0 11px; grid-template-columns: 72px 88px 87px 87px 1207px 73px 42px 26px 35px 35px 37px 101px 16px; background: radial-gradient(ellipse 500px 45px at 760px 0, rgba(18,76,120,.6), transparent), linear-gradient(#0d3554, #0b2e49 40%, #041827); border-top: 2px solid #47647b; }
.task { width: 83px; height: 54px; margin-left: -1px; border: 2px solid #0a1b28; box-shadow: inset 0 0 0 1px #607b8d; border-radius: 4px; background: linear-gradient(145deg, #667e90, #284861 45%, #173954); display: grid; place-items: center; }
.task.explorer { width: 76px; box-shadow: inset 0 0 0 1px #607b8d, 6px 0 #1d4662, 7px 0 #607b8d; }
.task.paint { background: linear-gradient(145deg, #8998a4, #566a7b 45%, #414c57); }
.sogou { margin-top: -6px; }
.ws { font: bold 16px "Liberation Sans", sans-serif; fill: #999; }
.clock { display: flex; flex-direction: column; align-items: center; line-height: 25px; width: 93px; color: #77848e; font-size: 16.700px; }
.clock span { position: relative; left: -1px; top: -1px; }
.peek { height: 54px; border: 1px solid #3f5a6c; background: #0a2232; }

.video-title { position: absolute; left: 24px; top: 30px; font: 20px/26px "Liberation Sans", "Noto Sans CJK SC", sans-serif; color: #fff; white-space: nowrap; }
.toast { position: absolute; left: 795px; top: 56px; width: 330px; height: 62px; background: rgba(46,48,52,.83); color: #fff; font-size: 18.800px; display: flex; align-items: center; padding-left: 49px; white-space: nowrap; }
kbd { width: 43px; height: 43px; margin: 0 9px 0 10px; border: 1px solid #fff; border-radius: 3px; font: 500 19px/43px "Noto Sans", sans-serif; text-align: center; }
.follow { position: absolute; left: 1686px; top: 23px; width: 130px; height: 40px; border-radius: 20px; background: #2b2c2d; display: flex; align-items: center; color: #fff; font-size: 18px; }
.follow span { margin-top: -2px; }
.follow svg + svg { margin: 0 8px 0 17px; }
.feedback { position: absolute; left: 1858px; top: 28px; }
.ime { position: absolute; left: 1740px; top: 736px; width: 168px; height: 35px; display: flex; align-items: center; border: 2px solid #c2cde0; border-left: 0; background: linear-gradient(90deg, transparent 15px, #fcfdff 15px); gap: 10px; }
.ime svg:first-child { margin: -3px -3px 0 0; }
.watermark { position: absolute; left: 1800px; top: 886px; filter: drop-shadow(0 1px 2px rgba(80,90,110,.4)); }
.progress { position: absolute; left: 15px; top: 1008px; width: 1890px; height: 2px; background: rgba(238,238,238,.7); }
.progress i { display: block; width: 1693px; height: 2px; background: #00a1d6; }
.controls { position: absolute; left: 0; top: 1022px; width: 1920px; height: 50px; display: grid; align-items: center; padding-left: 39px; grid-template-columns: 68px 64px 332px 81px 65px 805px 59px 70px 72px 66px 68px 68px 30px; color: #e7ebed; }
.time { font: 18px/24px "Liberation Sans", sans-serif; white-space: nowrap; margin-top: -2px; }
.toggle { width: 45px; height: 30px; border-radius: 15px; background: #00a1d6; padding: 2px 3px 0 17px; }
.toggle b { display: block; width: 25px; height: 25px; border-radius: 50%; background: #fff; color: #00a1d6; font: 700 15px/24px "Noto Sans CJK SC", sans-serif; text-align: center; }
.danmaku { width: 709px; height: 43px; margin-top: 1px; border-radius: 2px; background: linear-gradient(#69859b, #617a90 50%, #5f6f7c); display: flex; align-items: center; padding-left: 12px; font-size: 15px; line-height: 41px; color: #b3c0ca; overflow: hidden; }
.danmaku span, .danmaku a { margin-top: -2px; }
.danmaku a { margin-left: 6px; color: #fff; }
.danmaku button { margin-left: auto; width: 75px; height: 43px; border: 0; padding: 0 0 2px; background: linear-gradient(#9bacb9, #8d99a3); color: #c3ccd3; font: 15px "Noto Sans CJK SC", sans-serif; }
.ctl { font-size: 20px; line-height: 26px; padding-bottom: 3px; white-space: nowrap; position: relative; left: -1px; }
```
